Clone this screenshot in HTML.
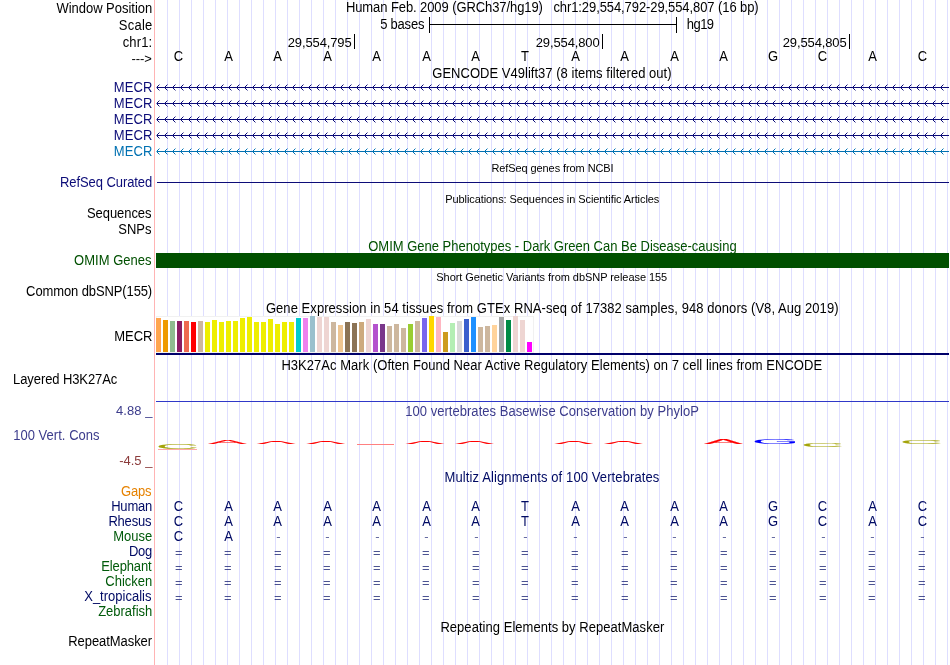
<!DOCTYPE html>
<html lang="en"><head><meta charset="utf-8"><title>UCSC Genome Browser chr1:29,554,792-29,554,807</title>
<style>html,body{margin:0;padding:0;background:#fff;overflow:hidden}svg{display:block;will-change:transform}text{font-family:"Liberation Sans", Arial, Helvetica, sans-serif;font-size:13px;fill:#000;white-space:pre}.s{font-size:11px}.nv{fill:#0C0C78}.bl{fill:#0071B2}.gr{fill:#005000}.sp{fill:#000A64}.sg{fill:#005A0A}.ph{fill:#3C3C8C}.ng{fill:#8C3C3C}.or{fill:#E68200}</style></head><body>
<svg width="950" height="665" viewBox="0 0 950 665" shape-rendering="crispEdges">
<rect width="950" height="665" fill="#fff"/>
<path d="M167.5 0V665M179.5 0V665M191.5 0V665M203.5 0V665M215.5 0V665M227.5 0V665M239.5 0V665M251.5 0V665M263.5 0V665M275.5 0V665M287.5 0V665M299.5 0V665M311.5 0V665M323.5 0V665M335.5 0V665M347.5 0V665M359.5 0V665M371.5 0V665M383.5 0V665M395.5 0V665M407.5 0V665M419.5 0V665M431.5 0V665M443.5 0V665M455.5 0V665M467.5 0V665M479.5 0V665M491.5 0V665M503.5 0V665M515.5 0V665M527.5 0V665M539.5 0V665M551.5 0V665M563.5 0V665M575.5 0V665M587.5 0V665M599.5 0V665M611.5 0V665M623.5 0V665M635.5 0V665M647.5 0V665M659.5 0V665M671.5 0V665M683.5 0V665M695.5 0V665M707.5 0V665M719.5 0V665M731.5 0V665M743.5 0V665M755.5 0V665M767.5 0V665M779.5 0V665M791.5 0V665M803.5 0V665M815.5 0V665M827.5 0V665M839.5 0V665M851.5 0V665M863.5 0V665M875.5 0V665M887.5 0V665M899.5 0V665M911.5 0V665M923.5 0V665M935.5 0V665M947.5 0V665" stroke="#DEDEFF" stroke-width="1" fill="none"/>
<rect x="154" y="0" width="1" height="665" fill="#FFB4B4"/>
<rect x="429" y="24" width="248" height="1" fill="#000"/>
<rect x="429" y="17" width="1" height="16" fill="#000"/>
<rect x="676" y="17" width="1" height="16" fill="#000"/>
<rect x="354" y="34" width="1" height="15" fill="#000"/>
<rect x="602" y="34" width="1" height="15" fill="#000"/>
<rect x="849" y="34" width="1" height="15" fill="#000"/>
<defs><g id="cv"><path d="M1 -1h1v1h-1zM2 -2h1v1h-1zM1 1h1v1h-1zM2 2h1v1h-1z"/><path fill-opacity=".45" d="M3 -3h1v1h-1zM3 3h1v1h-1z"/></g>
<g id="row"><rect x="157" y="0" width="792" height="1"/><rect x="156" y="0" width="1" height="1" fill-opacity=".5"/><use href="#cv" x="156"/><use href="#cv" x="164"/><use href="#cv" x="172"/><use href="#cv" x="180"/><use href="#cv" x="188"/><use href="#cv" x="196"/><use href="#cv" x="204"/><use href="#cv" x="212"/><use href="#cv" x="220"/><use href="#cv" x="228"/><use href="#cv" x="236"/><use href="#cv" x="244"/><use href="#cv" x="252"/><use href="#cv" x="260"/><use href="#cv" x="268"/><use href="#cv" x="276"/><use href="#cv" x="284"/><use href="#cv" x="292"/><use href="#cv" x="300"/><use href="#cv" x="308"/><use href="#cv" x="316"/><use href="#cv" x="324"/><use href="#cv" x="332"/><use href="#cv" x="340"/><use href="#cv" x="348"/><use href="#cv" x="356"/><use href="#cv" x="364"/><use href="#cv" x="372"/><use href="#cv" x="380"/><use href="#cv" x="388"/><use href="#cv" x="396"/><use href="#cv" x="404"/><use href="#cv" x="412"/><use href="#cv" x="420"/><use href="#cv" x="428"/><use href="#cv" x="436"/><use href="#cv" x="444"/><use href="#cv" x="452"/><use href="#cv" x="460"/><use href="#cv" x="468"/><use href="#cv" x="476"/><use href="#cv" x="484"/><use href="#cv" x="492"/><use href="#cv" x="500"/><use href="#cv" x="508"/><use href="#cv" x="516"/><use href="#cv" x="524"/><use href="#cv" x="532"/><use href="#cv" x="540"/><use href="#cv" x="548"/><use href="#cv" x="556"/><use href="#cv" x="564"/><use href="#cv" x="572"/><use href="#cv" x="580"/><use href="#cv" x="588"/><use href="#cv" x="596"/><use href="#cv" x="604"/><use href="#cv" x="612"/><use href="#cv" x="620"/><use href="#cv" x="628"/><use href="#cv" x="636"/><use href="#cv" x="644"/><use href="#cv" x="652"/><use href="#cv" x="660"/><use href="#cv" x="668"/><use href="#cv" x="676"/><use href="#cv" x="684"/><use href="#cv" x="692"/><use href="#cv" x="700"/><use href="#cv" x="708"/><use href="#cv" x="716"/><use href="#cv" x="724"/><use href="#cv" x="732"/><use href="#cv" x="740"/><use href="#cv" x="748"/><use href="#cv" x="756"/><use href="#cv" x="764"/><use href="#cv" x="772"/><use href="#cv" x="780"/><use href="#cv" x="788"/><use href="#cv" x="796"/><use href="#cv" x="804"/><use href="#cv" x="812"/><use href="#cv" x="820"/><use href="#cv" x="828"/><use href="#cv" x="836"/><use href="#cv" x="844"/><use href="#cv" x="852"/><use href="#cv" x="860"/><use href="#cv" x="868"/><use href="#cv" x="876"/><use href="#cv" x="884"/><use href="#cv" x="892"/><use href="#cv" x="900"/><use href="#cv" x="908"/><use href="#cv" x="916"/><use href="#cv" x="924"/><use href="#cv" x="932"/><use href="#cv" x="940"/></g></defs>
<use href="#row" y="87" fill="#0C0C78"/>
<use href="#row" y="103" fill="#0C0C78"/>
<use href="#row" y="119" fill="#0C0C78"/>
<use href="#row" y="135" fill="#0C0C78"/>
<use href="#row" y="151" fill="#0071B2"/>
<rect x="157" y="182" width="792" height="1" fill="#0C0C78"/>
<rect x="156" y="253" width="793" height="15" fill="#005000"/>
<rect x="156.5" y="316.5" width="377" height="36" fill="#fff" stroke="#F1F1F1"/>
<rect x="156" y="318" width="5" height="34" fill="#FFA54F"/>
<rect x="163" y="320" width="5" height="32" fill="#EE9A00"/>
<rect x="170" y="321" width="5" height="31" fill="#8FBC8F"/>
<rect x="177" y="321" width="5" height="31" fill="#8B1C62"/>
<rect x="184" y="321" width="5" height="31" fill="#EE6A50"/>
<rect x="191" y="322" width="5" height="30" fill="#FF0000"/>
<rect x="198" y="321" width="5" height="31" fill="#CDB79E"/>
<rect x="205" y="322" width="5" height="30" fill="#EEEE00"/>
<rect x="212" y="320" width="5" height="32" fill="#EEEE00"/>
<rect x="219" y="322" width="5" height="30" fill="#EEEE00"/>
<rect x="226" y="321" width="5" height="31" fill="#EEEE00"/>
<rect x="233" y="321" width="5" height="31" fill="#EEEE00"/>
<rect x="240" y="318" width="5" height="34" fill="#EEEE00"/>
<rect x="247" y="317" width="5" height="35" fill="#EEEE00"/>
<rect x="254" y="322" width="5" height="30" fill="#EEEE00"/>
<rect x="261" y="322" width="5" height="30" fill="#EEEE00"/>
<rect x="268" y="319" width="5" height="33" fill="#EEEE00"/>
<rect x="275" y="324" width="5" height="28" fill="#EEEE00"/>
<rect x="282" y="322" width="5" height="30" fill="#EEEE00"/>
<rect x="289" y="322" width="5" height="30" fill="#EEEE00"/>
<rect x="296" y="318" width="5" height="34" fill="#00CDCD"/>
<rect x="303" y="318" width="5" height="34" fill="#EE82EE"/>
<rect x="310" y="316" width="5" height="36" fill="#9AC0CD"/>
<rect x="317" y="317" width="5" height="35" fill="#EED5D2"/>
<rect x="324" y="317" width="5" height="35" fill="#EED5D2"/>
<rect x="331" y="322" width="5" height="30" fill="#CDB79E"/>
<rect x="338" y="325" width="5" height="27" fill="#EEC591"/>
<rect x="345" y="322" width="5" height="30" fill="#8B7355"/>
<rect x="352" y="323" width="5" height="29" fill="#8B7355"/>
<rect x="359" y="322" width="5" height="30" fill="#CDAA7D"/>
<rect x="366" y="319" width="5" height="33" fill="#EED5D2"/>
<rect x="373" y="324" width="5" height="28" fill="#B452CD"/>
<rect x="380" y="324" width="5" height="28" fill="#7A378B"/>
<rect x="387" y="326" width="5" height="26" fill="#CDB79E"/>
<rect x="394" y="324" width="5" height="28" fill="#CDB79E"/>
<rect x="401" y="328" width="5" height="24" fill="#CDB79E"/>
<rect x="408" y="324" width="5" height="28" fill="#9ACD32"/>
<rect x="415" y="321" width="5" height="31" fill="#CDB79E"/>
<rect x="422" y="318" width="5" height="34" fill="#7A67EE"/>
<rect x="429" y="316" width="5" height="36" fill="#FFD700"/>
<rect x="436" y="317" width="5" height="35" fill="#FFB6C1"/>
<rect x="443" y="332" width="5" height="20" fill="#CD9B1D"/>
<rect x="450" y="323" width="5" height="29" fill="#B4EEB4"/>
<rect x="457" y="321" width="5" height="31" fill="#D9D9D9"/>
<rect x="464" y="319" width="5" height="33" fill="#3A5FCD"/>
<rect x="471" y="317" width="5" height="35" fill="#1E90FF"/>
<rect x="478" y="327" width="5" height="25" fill="#CDB79E"/>
<rect x="485" y="326" width="5" height="26" fill="#CDB79E"/>
<rect x="492" y="325" width="5" height="27" fill="#FFD39B"/>
<rect x="499" y="317" width="5" height="35" fill="#A6A6A6"/>
<rect x="506" y="320" width="5" height="32" fill="#008B45"/>
<rect x="513" y="316" width="5" height="36" fill="#EED5D2"/>
<rect x="520" y="320" width="5" height="32" fill="#EED5D2"/>
<rect x="527" y="342" width="5" height="10" fill="#FF00FF"/>
<rect x="156" y="353" width="793" height="2" fill="#00006A"/>
<rect x="156" y="401" width="793" height="1" fill="#3038C8"/>
<g transform="translate(158.60 448.90) scale(4.614 0.548)" shape-rendering="auto"><text x="-0.60" y="0" style="fill:#A4A40A;stroke:#A4A40A;stroke-width:0.12">C</text></g>
<rect x="158" y="449" width="39" height="1" fill="#FFA8A8"/>
<g transform="translate(208.20 443.90) scale(4.418 0.441)" shape-rendering="auto"><text x="-0.00" y="0" style="fill:#FF0000;stroke:#FF0000;stroke-width:0.15">A</text></g>
<clipPath id="ca1"><path d="M255.2 444.2L271.1 440.7L281.1 440.7L297.1 444.2L289.1 444.2L281.1 441.9L271.1 441.9L263.2 444.2z"/></clipPath>
<g clip-path="url(#ca1)">
<g transform="translate(256.20 443.90) scale(4.602 0.312)" shape-rendering="auto"><text x="-0.00" y="0" style="fill:#FF0000;stroke:#FF0000;stroke-width:0.5">A</text></g>
</g>
<clipPath id="ca2"><path d="M304.8 444.2L320.8 440.7L330.8 440.7L346.7 444.2L338.7 444.2L330.8 441.9L320.8 441.9L312.8 444.2z"/></clipPath>
<g clip-path="url(#ca2)">
<g transform="translate(305.80 443.90) scale(4.602 0.312)" shape-rendering="auto"><text x="-0.00" y="0" style="fill:#FF0000;stroke:#FF0000;stroke-width:0.5">A</text></g>
</g>
<rect x="357" y="444" width="37" height="1" fill="#FF8080"/>
<clipPath id="ca3"><path d="M404.0 444.2L420.0 440.7L430.0 440.7L445.9 444.2L437.9 444.2L430.0 441.9L420.0 441.9L412.0 444.2z"/></clipPath>
<g clip-path="url(#ca3)">
<g transform="translate(405.00 443.90) scale(4.602 0.312)" shape-rendering="auto"><text x="-0.00" y="0" style="fill:#FF0000;stroke:#FF0000;stroke-width:0.5">A</text></g>
</g>
<clipPath id="ca4"><path d="M453.6 444.2L469.6 440.7L479.6 440.7L495.5 444.2L487.5 444.2L479.6 441.9L469.6 441.9L461.6 444.2z"/></clipPath>
<g clip-path="url(#ca4)">
<g transform="translate(454.60 443.90) scale(4.602 0.312)" shape-rendering="auto"><text x="-0.00" y="0" style="fill:#FF0000;stroke:#FF0000;stroke-width:0.5">A</text></g>
</g>
<clipPath id="ca5"><path d="M552.8 444.2L568.8 440.7L578.8 440.7L594.7 444.2L586.7 444.2L578.8 441.9L568.8 441.9L560.8 444.2z"/></clipPath>
<g clip-path="url(#ca5)">
<g transform="translate(553.80 443.90) scale(4.602 0.312)" shape-rendering="auto"><text x="-0.00" y="0" style="fill:#FF0000;stroke:#FF0000;stroke-width:0.5">A</text></g>
</g>
<clipPath id="ca6"><path d="M602.4 444.2L618.4 440.7L628.4 440.7L644.3 444.2L636.3 444.2L628.4 441.9L618.4 441.9L610.4 444.2z"/></clipPath>
<g clip-path="url(#ca6)">
<g transform="translate(603.40 443.90) scale(4.602 0.312)" shape-rendering="auto"><text x="-0.00" y="0" style="fill:#FF0000;stroke:#FF0000;stroke-width:0.5">A</text></g>
</g>
<g transform="translate(704.20 443.90) scale(4.418 0.548)" shape-rendering="auto"><text x="-0.00" y="0" style="fill:#FF0000;stroke:#FF0000;stroke-width:0.15">A</text></g>
<rect x="762" y="440" width="28" height="3" fill="#fff"/>
<g transform="translate(754.60 444.00) scale(4.719 0.559)" shape-rendering="auto"><text x="-0.60" y="0" style="fill:#0000FF;stroke:#0000FF;stroke-width:0.08">G</text></g>
<g transform="translate(803.40 447.20) scale(4.614 0.355)" shape-rendering="auto"><text x="-0.60" y="0" style="fill:#A4A40A;stroke:#A4A40A;stroke-width:0.08">C</text></g>
<g transform="translate(902.60 444.10) scale(4.614 0.462)" shape-rendering="auto"><text x="-0.60" y="0" style="fill:#A4A40A;stroke:#A4A40A;stroke-width:0.1">C</text></g>
<text transform="translate(56.40 13.00) scale(1 1.055)" style="letter-spacing:-0.019px">Window Position</text>
<text transform="translate(345.90 12.00) scale(1 1.055)" xml:space="preserve" style="letter-spacing:-0.086px">Human Feb. 2009 (GRCh37/hg19)   chr1:29,554,792-29,554,807 (16 bp)</text>
<text transform="translate(118.80 30.00) scale(1 1.055)" style="letter-spacing:0.228px">Scale</text>
<text transform="translate(380.20 29.00) scale(1 1.055)" style="letter-spacing:-0.222px">5 bases</text>
<text transform="translate(686.80 29.00) scale(1 1.055)" style="letter-spacing:-0.563px">hg19</text>
<text transform="translate(122.70 47.00) scale(1 1.055)" style="letter-spacing:0.128px">chr1:</text>
<text transform="translate(287.70 47.00) scale(1 0.980)" style="letter-spacing:-0.115px">29,554,795</text>
<text transform="translate(535.70 47.00) scale(1 0.980)" style="letter-spacing:-0.115px">29,554,800</text>
<text transform="translate(782.70 47.00) scale(1 0.980)" style="letter-spacing:-0.115px">29,554,805</text>
<text transform="translate(131.60 63.40) scale(1 0.950)" style="letter-spacing:-0.129px">---&gt;</text>
<text transform="translate(173.81 61.00) scale(1 1.055)">C</text>
<text transform="translate(224.16 61.00) scale(1 1.055)">A</text>
<text transform="translate(273.17 61.00) scale(1 1.055)">A</text>
<text transform="translate(323.17 61.00) scale(1 1.055)">A</text>
<text transform="translate(372.17 61.00) scale(1 1.055)">A</text>
<text transform="translate(422.17 61.00) scale(1 1.055)">A</text>
<text transform="translate(471.17 61.00) scale(1 1.055)">A</text>
<text transform="translate(521.03 61.00) scale(1 1.055)">T</text>
<text transform="translate(571.16 61.00) scale(1 1.055)">A</text>
<text transform="translate(620.16 61.00) scale(1 1.055)">A</text>
<text transform="translate(670.16 61.00) scale(1 1.055)">A</text>
<text transform="translate(719.16 61.00) scale(1 1.055)">A</text>
<text transform="translate(767.95 61.00) scale(1 1.055)">G</text>
<text transform="translate(817.80 61.00) scale(1 1.055)">C</text>
<text transform="translate(868.16 61.00) scale(1 1.055)">A</text>
<text transform="translate(917.80 61.00) scale(1 1.055)">C</text>
<text transform="translate(432.30 78.00) scale(1 1.055)" style="letter-spacing:0.023px">GENCODE V49lift37 (8 items filtered out)</text>
<text transform="translate(113.70 92.00) scale(1 1.055)" class="nv" style="letter-spacing:0.104px">MECR</text>
<text transform="translate(113.70 108.00) scale(1 1.055)" class="nv" style="letter-spacing:0.104px">MECR</text>
<text transform="translate(113.70 124.00) scale(1 1.055)" class="nv" style="letter-spacing:0.104px">MECR</text>
<text transform="translate(113.70 140.00) scale(1 1.055)" class="nv" style="letter-spacing:0.104px">MECR</text>
<text transform="translate(113.70 156.00) scale(1 1.055)" class="bl" style="letter-spacing:0.104px">MECR</text>
<text transform="translate(491.40 172.00) scale(1 1.055)" class="s" style="letter-spacing:-0.084px">RefSeq genes from NCBI</text>
<text transform="translate(60.00 187.00) scale(1 1.055)" class="nv" style="letter-spacing:-0.076px">RefSeq Curated</text>
<text transform="translate(445.20 203.00) scale(1 1.055)" class="s" style="letter-spacing:-0.075px">Publications: Sequences in Scientific Articles</text>
<text transform="translate(87.00 218.00) scale(1 1.055)" style="letter-spacing:-0.069px">Sequences</text>
<text transform="translate(118.20 234.00) scale(1 1.055)" style="letter-spacing:0.023px">SNPs</text>
<text transform="translate(368.20 251.00) scale(1 1.055)" class="gr">OMIM Gene Phenotypes - Dark Green Can Be Disease-causing</text>
<text transform="translate(74.10 265.00) scale(1 1.055)" class="gr" style="letter-spacing:0.012px">OMIM Genes</text>
<text transform="translate(436.30 281.00) scale(1 1.055)" class="s" style="letter-spacing:-0.046px">Short Genetic Variants from dbSNP release 155</text>
<text transform="translate(26.10 296.00) scale(1 1.055)" style="letter-spacing:-0.110px">Common dbSNP(155)</text>
<text transform="translate(265.90 313.00) scale(1 1.055)" style="letter-spacing:0.061px">Gene Expression in 54 tissues from GTEx RNA-seq of 17382 samples, 948 donors (V8, Aug 2019)</text>
<text transform="translate(114.30 341.00) scale(1 1.055)" style="letter-spacing:-0.063px">MECR</text>
<text transform="translate(281.40 370.30) scale(1 1.055)" style="letter-spacing:0.038px">H3K27Ac Mark (Often Found Near Active Regulatory Elements) on 7 cell lines from ENCODE</text>
<text transform="translate(13.10 384.00) scale(1 1.055)" style="letter-spacing:-0.094px">Layered H3K27Ac</text>
<text transform="translate(116.00 415.00) scale(1 0.980)" class="ph" style="letter-spacing:0.057px">4.88 _</text>
<text transform="translate(405.20 416.00) scale(1 1.055)" class="ph" style="letter-spacing:0.038px">100 vertebrates Basewise Conservation by PhyloP</text>
<text transform="translate(13.20 439.50) scale(1 1.055)" class="ph" style="letter-spacing:0.031px">100 Vert. Cons</text>
<text transform="translate(119.20 464.60) scale(1 0.980)" class="ng" style="letter-spacing:-0.003px">-4.5 _</text>
<text transform="translate(444.60 482.00) scale(1 1.055)" class="sp" style="letter-spacing:0.108px">Multiz Alignments of 100 Vertebrates</text>
<text transform="translate(121.10 496.00) scale(1 1.055)" class="or" style="letter-spacing:-0.224px">Gaps</text>
<text transform="translate(111.20 511.00) scale(1 1.055)" class="sp" style="letter-spacing:-0.219px">Human</text>
<text transform="translate(173.81 511.00) scale(1 1.055)" class="sp">C</text>
<text transform="translate(224.16 511.00) scale(1 1.055)" class="sp">A</text>
<text transform="translate(273.17 511.00) scale(1 1.055)" class="sp">A</text>
<text transform="translate(323.17 511.00) scale(1 1.055)" class="sp">A</text>
<text transform="translate(372.17 511.00) scale(1 1.055)" class="sp">A</text>
<text transform="translate(422.17 511.00) scale(1 1.055)" class="sp">A</text>
<text transform="translate(471.17 511.00) scale(1 1.055)" class="sp">A</text>
<text transform="translate(521.03 511.00) scale(1 1.055)" class="sp">T</text>
<text transform="translate(571.16 511.00) scale(1 1.055)" class="sp">A</text>
<text transform="translate(620.16 511.00) scale(1 1.055)" class="sp">A</text>
<text transform="translate(670.16 511.00) scale(1 1.055)" class="sp">A</text>
<text transform="translate(719.16 511.00) scale(1 1.055)" class="sp">A</text>
<text transform="translate(767.95 511.00) scale(1 1.055)" class="sp">G</text>
<text transform="translate(817.80 511.00) scale(1 1.055)" class="sp">C</text>
<text transform="translate(868.16 511.00) scale(1 1.055)" class="sp">A</text>
<text transform="translate(917.80 511.00) scale(1 1.055)" class="sp">C</text>
<text transform="translate(108.40 526.00) scale(1 1.055)" class="sp" style="letter-spacing:-0.196px">Rhesus</text>
<text transform="translate(173.81 526.00) scale(1 1.055)" class="sp">C</text>
<text transform="translate(224.16 526.00) scale(1 1.055)" class="sp">A</text>
<text transform="translate(273.17 526.00) scale(1 1.055)" class="sp">A</text>
<text transform="translate(323.17 526.00) scale(1 1.055)" class="sp">A</text>
<text transform="translate(372.17 526.00) scale(1 1.055)" class="sp">A</text>
<text transform="translate(422.17 526.00) scale(1 1.055)" class="sp">A</text>
<text transform="translate(471.17 526.00) scale(1 1.055)" class="sp">A</text>
<text transform="translate(521.03 526.00) scale(1 1.055)" class="sp">T</text>
<text transform="translate(571.16 526.00) scale(1 1.055)" class="sp">A</text>
<text transform="translate(620.16 526.00) scale(1 1.055)" class="sp">A</text>
<text transform="translate(670.16 526.00) scale(1 1.055)" class="sp">A</text>
<text transform="translate(719.16 526.00) scale(1 1.055)" class="sp">A</text>
<text transform="translate(767.95 526.00) scale(1 1.055)" class="sp">G</text>
<text transform="translate(817.80 526.00) scale(1 1.055)" class="sp">C</text>
<text transform="translate(868.16 526.00) scale(1 1.055)" class="sp">A</text>
<text transform="translate(917.80 526.00) scale(1 1.055)" class="sp">C</text>
<text transform="translate(113.20 541.00) scale(1 1.055)" class="sg" style="letter-spacing:0.003px">Mouse</text>
<text transform="translate(173.81 541.00) scale(1 1.055)" class="sp">C</text>
<text transform="translate(224.16 541.00) scale(1 1.055)" class="sp">A</text>
<text transform="translate(276.13 540.20) scale(1 0.900)" class="sp" style="fill-opacity:0.7">-</text>
<text transform="translate(325.13 540.20) scale(1 0.900)" class="sp" style="fill-opacity:0.7">-</text>
<text transform="translate(375.13 540.20) scale(1 0.900)" class="sp" style="fill-opacity:0.7">-</text>
<text transform="translate(424.13 540.20) scale(1 0.900)" class="sp" style="fill-opacity:0.7">-</text>
<text transform="translate(474.13 540.20) scale(1 0.900)" class="sp" style="fill-opacity:0.7">-</text>
<text transform="translate(523.13 540.20) scale(1 0.900)" class="sp" style="fill-opacity:0.7">-</text>
<text transform="translate(573.13 540.20) scale(1 0.900)" class="sp" style="fill-opacity:0.7">-</text>
<text transform="translate(623.13 540.20) scale(1 0.900)" class="sp" style="fill-opacity:0.7">-</text>
<text transform="translate(672.13 540.20) scale(1 0.900)" class="sp" style="fill-opacity:0.7">-</text>
<text transform="translate(722.13 540.20) scale(1 0.900)" class="sp" style="fill-opacity:0.7">-</text>
<text transform="translate(771.13 540.20) scale(1 0.900)" class="sp" style="fill-opacity:0.7">-</text>
<text transform="translate(821.13 540.20) scale(1 0.900)" class="sp" style="fill-opacity:0.7">-</text>
<text transform="translate(870.13 540.20) scale(1 0.900)" class="sp" style="fill-opacity:0.7">-</text>
<text transform="translate(920.13 540.20) scale(1 0.900)" class="sp" style="fill-opacity:0.7">-</text>
<text transform="translate(129.00 556.00) scale(1 1.055)" class="sp" style="letter-spacing:-0.309px">Dog</text>
<text transform="translate(175.01 557.20) scale(1 0.810)" class="sp" style="fill-opacity:0.7">=</text>
<text transform="translate(224.01 557.20) scale(1 0.810)" class="sp" style="fill-opacity:0.7">=</text>
<text transform="translate(274.00 557.20) scale(1 0.810)" class="sp" style="fill-opacity:0.7">=</text>
<text transform="translate(323.00 557.20) scale(1 0.810)" class="sp" style="fill-opacity:0.7">=</text>
<text transform="translate(373.00 557.20) scale(1 0.810)" class="sp" style="fill-opacity:0.7">=</text>
<text transform="translate(422.00 557.20) scale(1 0.810)" class="sp" style="fill-opacity:0.7">=</text>
<text transform="translate(472.00 557.20) scale(1 0.810)" class="sp" style="fill-opacity:0.7">=</text>
<text transform="translate(521.00 557.20) scale(1 0.810)" class="sp" style="fill-opacity:0.7">=</text>
<text transform="translate(571.00 557.20) scale(1 0.810)" class="sp" style="fill-opacity:0.7">=</text>
<text transform="translate(621.00 557.20) scale(1 0.810)" class="sp" style="fill-opacity:0.7">=</text>
<text transform="translate(670.00 557.20) scale(1 0.810)" class="sp" style="fill-opacity:0.7">=</text>
<text transform="translate(720.00 557.20) scale(1 0.810)" class="sp" style="fill-opacity:0.7">=</text>
<text transform="translate(769.00 557.20) scale(1 0.810)" class="sp" style="fill-opacity:0.7">=</text>
<text transform="translate(819.00 557.20) scale(1 0.810)" class="sp" style="fill-opacity:0.7">=</text>
<text transform="translate(868.00 557.20) scale(1 0.810)" class="sp" style="fill-opacity:0.7">=</text>
<text transform="translate(918.00 557.20) scale(1 0.810)" class="sp" style="fill-opacity:0.7">=</text>
<text transform="translate(101.30 571.00) scale(1 1.055)" class="sg" style="letter-spacing:-0.144px">Elephant</text>
<text transform="translate(175.01 572.20) scale(1 0.810)" class="sp" style="fill-opacity:0.7">=</text>
<text transform="translate(224.01 572.20) scale(1 0.810)" class="sp" style="fill-opacity:0.7">=</text>
<text transform="translate(274.00 572.20) scale(1 0.810)" class="sp" style="fill-opacity:0.7">=</text>
<text transform="translate(323.00 572.20) scale(1 0.810)" class="sp" style="fill-opacity:0.7">=</text>
<text transform="translate(373.00 572.20) scale(1 0.810)" class="sp" style="fill-opacity:0.7">=</text>
<text transform="translate(422.00 572.20) scale(1 0.810)" class="sp" style="fill-opacity:0.7">=</text>
<text transform="translate(472.00 572.20) scale(1 0.810)" class="sp" style="fill-opacity:0.7">=</text>
<text transform="translate(521.00 572.20) scale(1 0.810)" class="sp" style="fill-opacity:0.7">=</text>
<text transform="translate(571.00 572.20) scale(1 0.810)" class="sp" style="fill-opacity:0.7">=</text>
<text transform="translate(621.00 572.20) scale(1 0.810)" class="sp" style="fill-opacity:0.7">=</text>
<text transform="translate(670.00 572.20) scale(1 0.810)" class="sp" style="fill-opacity:0.7">=</text>
<text transform="translate(720.00 572.20) scale(1 0.810)" class="sp" style="fill-opacity:0.7">=</text>
<text transform="translate(769.00 572.20) scale(1 0.810)" class="sp" style="fill-opacity:0.7">=</text>
<text transform="translate(819.00 572.20) scale(1 0.810)" class="sp" style="fill-opacity:0.7">=</text>
<text transform="translate(868.00 572.20) scale(1 0.810)" class="sp" style="fill-opacity:0.7">=</text>
<text transform="translate(918.00 572.20) scale(1 0.810)" class="sp" style="fill-opacity:0.7">=</text>
<text transform="translate(105.30 586.00) scale(1 1.055)" class="sg" style="letter-spacing:-0.006px">Chicken</text>
<text transform="translate(175.01 587.20) scale(1 0.810)" class="sp" style="fill-opacity:0.7">=</text>
<text transform="translate(224.01 587.20) scale(1 0.810)" class="sp" style="fill-opacity:0.7">=</text>
<text transform="translate(274.00 587.20) scale(1 0.810)" class="sp" style="fill-opacity:0.7">=</text>
<text transform="translate(323.00 587.20) scale(1 0.810)" class="sp" style="fill-opacity:0.7">=</text>
<text transform="translate(373.00 587.20) scale(1 0.810)" class="sp" style="fill-opacity:0.7">=</text>
<text transform="translate(422.00 587.20) scale(1 0.810)" class="sp" style="fill-opacity:0.7">=</text>
<text transform="translate(472.00 587.20) scale(1 0.810)" class="sp" style="fill-opacity:0.7">=</text>
<text transform="translate(521.00 587.20) scale(1 0.810)" class="sp" style="fill-opacity:0.7">=</text>
<text transform="translate(571.00 587.20) scale(1 0.810)" class="sp" style="fill-opacity:0.7">=</text>
<text transform="translate(621.00 587.20) scale(1 0.810)" class="sp" style="fill-opacity:0.7">=</text>
<text transform="translate(670.00 587.20) scale(1 0.810)" class="sp" style="fill-opacity:0.7">=</text>
<text transform="translate(720.00 587.20) scale(1 0.810)" class="sp" style="fill-opacity:0.7">=</text>
<text transform="translate(769.00 587.20) scale(1 0.810)" class="sp" style="fill-opacity:0.7">=</text>
<text transform="translate(819.00 587.20) scale(1 0.810)" class="sp" style="fill-opacity:0.7">=</text>
<text transform="translate(868.00 587.20) scale(1 0.810)" class="sp" style="fill-opacity:0.7">=</text>
<text transform="translate(918.00 587.20) scale(1 0.810)" class="sp" style="fill-opacity:0.7">=</text>
<text transform="translate(84.20 601.00) scale(1 1.055)" class="sp" style="letter-spacing:0.009px">X_tropicalis</text>
<text transform="translate(175.01 602.20) scale(1 0.810)" class="sp" style="fill-opacity:0.7">=</text>
<text transform="translate(224.01 602.20) scale(1 0.810)" class="sp" style="fill-opacity:0.7">=</text>
<text transform="translate(274.00 602.20) scale(1 0.810)" class="sp" style="fill-opacity:0.7">=</text>
<text transform="translate(323.00 602.20) scale(1 0.810)" class="sp" style="fill-opacity:0.7">=</text>
<text transform="translate(373.00 602.20) scale(1 0.810)" class="sp" style="fill-opacity:0.7">=</text>
<text transform="translate(422.00 602.20) scale(1 0.810)" class="sp" style="fill-opacity:0.7">=</text>
<text transform="translate(472.00 602.20) scale(1 0.810)" class="sp" style="fill-opacity:0.7">=</text>
<text transform="translate(521.00 602.20) scale(1 0.810)" class="sp" style="fill-opacity:0.7">=</text>
<text transform="translate(571.00 602.20) scale(1 0.810)" class="sp" style="fill-opacity:0.7">=</text>
<text transform="translate(621.00 602.20) scale(1 0.810)" class="sp" style="fill-opacity:0.7">=</text>
<text transform="translate(670.00 602.20) scale(1 0.810)" class="sp" style="fill-opacity:0.7">=</text>
<text transform="translate(720.00 602.20) scale(1 0.810)" class="sp" style="fill-opacity:0.7">=</text>
<text transform="translate(769.00 602.20) scale(1 0.810)" class="sp" style="fill-opacity:0.7">=</text>
<text transform="translate(819.00 602.20) scale(1 0.810)" class="sp" style="fill-opacity:0.7">=</text>
<text transform="translate(868.00 602.20) scale(1 0.810)" class="sp" style="fill-opacity:0.7">=</text>
<text transform="translate(918.00 602.20) scale(1 0.810)" class="sp" style="fill-opacity:0.7">=</text>
<text transform="translate(98.20 616.00) scale(1 1.055)" class="sg" style="letter-spacing:-0.020px">Zebrafish</text>
<text transform="translate(440.40 631.50) scale(1 1.055)" style="letter-spacing:0.041px">Repeating Elements by RepeatMasker</text>
<text transform="translate(68.30 646.00) scale(1 1.055)" style="letter-spacing:-0.064px">RepeatMasker</text>
</svg></body></html>
